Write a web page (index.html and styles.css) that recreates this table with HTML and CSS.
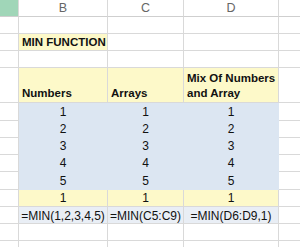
FILE: index.html
```html
<!DOCTYPE html>
<html>
<head>
<meta charset="utf-8">
<link rel="stylesheet" href="styles.css">
</head>
<body>
<table class="sheet">
  <colgroup>
    <col class="col-a"><col class="col-b"><col class="col-c"><col class="col-d"><col class="col-e">
  </colgroup>
  <tr class="hdr">
    <td class="hdr-sel"></td><td>B</td><td>C</td><td>D</td><td></td>
  </tr>
  <tr><td></td><td></td><td></td><td></td><td></td></tr>
  <tr><td></td><td class="title">MIN FUNCTION</td><td></td><td></td><td></td></tr>
  <tr><td></td><td></td><td></td><td></td><td></td></tr>
  <tr class="tall">
    <td></td><td class="yel head">Numbers</td><td class="yel head">Arrays</td><td class="yel head">Mix Of Numbers and Array</td><td></td>
  </tr>
  <tr class="row18"><td></td><td class="blue num">1</td><td class="blue num">1</td><td class="blue num">1</td><td></td></tr>
  <tr><td></td><td class="blue num">2</td><td class="blue num">2</td><td class="blue num">2</td><td></td></tr>
  <tr><td></td><td class="blue num">3</td><td class="blue num">3</td><td class="blue num">3</td><td></td></tr>
  <tr><td></td><td class="blue num">4</td><td class="blue num">4</td><td class="blue num">4</td><td></td></tr>
  <tr class="row18"><td></td><td class="blue num">5</td><td class="blue num">5</td><td class="blue num">5</td><td></td></tr>
  <tr><td></td><td class="yel num">1</td><td class="yel num">1</td><td class="yel num">1</td><td></td></tr>
  <tr><td></td><td class="frm">=MIN(1,2,3,4,5)</td><td class="frm">=MIN(C5:C9)</td><td class="frm">=MIN(D6:D9,1)</td><td></td></tr>
  <tr><td></td><td></td><td></td><td></td><td></td></tr>
  <tr><td></td><td></td><td></td><td></td><td></td></tr>
</table>
</body>
</html>
```
FILE: styles.css
```css
html, body {
  margin: 0;
  padding: 0;
  background: #ffffff;
  overflow: hidden;
}

.sheet {
  border-collapse: separate;
  border-spacing: 0;
  table-layout: fixed;
  width: 300px;
  font-family: "Liberation Sans", Arial, sans-serif;
  font-size: 12px;
  color: #111111;
}

.col-a { width: 19px; }
.col-b { width: 89px; }
.col-c { width: 76px; }
.col-d { width: 95px; }
.col-e { width: 21px; }

.sheet td {
  box-sizing: border-box;
  height: 17px;
  padding: 0 2px 1px 2px;
  border-right: 1px solid #d9d9d9;
  border-bottom: 1px solid #d9d9d9;
  vertical-align: bottom;
  line-height: 14px;
  white-space: nowrap;
  overflow: hidden;
}

.sheet td:last-child {
  border-right: none;
}

.sheet .hdr td {
  text-align: center;
  vertical-align: middle;
  color: #666666;
  font-size: 12.5px;
  padding: 0;
  border-bottom-color: #cfcfcf;
}

.sheet .hdr .hdr-sel {
  background: #a0d6b8;
}

.sheet .title {
  background: #fdf9c9;
  font-weight: bold;
  font-size: 11.5px;
  padding-left: 3px;
}

.sheet .tall td {
  height: 35px;
}

.sheet .row18 td {
  height: 18px;
}

.sheet .yel {
  background: #fdf9c9;
}

.sheet .head {
  font-weight: bold;
  font-size: 11.5px;
  white-space: normal;
  line-height: 15px;
  padding-left: 3px;
}

.sheet .blue {
  background: #dce6f2;
  border-color: transparent;
}

.sheet .num {
  text-align: center;
}

.sheet .frm {
  background: #e9eef5;
  text-align: center;
  padding: 0;
}
```
